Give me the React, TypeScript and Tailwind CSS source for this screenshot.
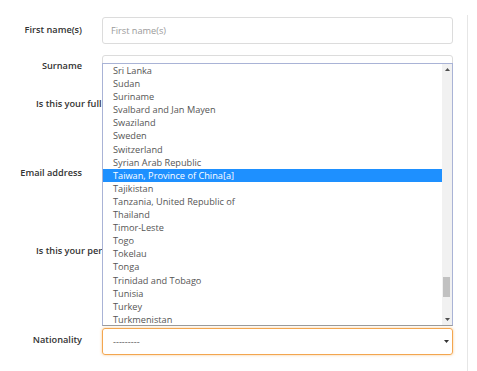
import React from 'react';

const countries = [
  'Sri Lanka',
  'Sudan',
  'Suriname',
  'Svalbard and Jan Mayen',
  'Swaziland',
  'Sweden',
  'Switzerland',
  'Syrian Arab Republic',
  'Taiwan, Province of China[a]',
  'Tajikistan',
  'Tanzania, United Republic of',
  'Thailand',
  'Timor-Leste',
  'Togo',
  'Tokelau',
  'Tonga',
  'Trinidad and Tobago',
  'Tunisia',
  'Turkey',
  'Turkmenistan',
];

const selected = 'Taiwan, Province of China[a]';

function Label({ children, long }: { children: React.ReactNode; long?: boolean }) {
  if (long) {
    return (
      <div className="w-[102px] shrink-0 pl-[36px] whitespace-nowrap overflow-hidden text-[9.2px] font-semibold text-[#333]">
        {children}
      </div>
    );
  }
  return (
    <div className="w-[82px] mr-[20px] shrink-0 text-right text-[9.2px] font-semibold text-[#333]">
      {children}
    </div>
  );
}

function CountryList() {
  return (
    <div className="absolute left-[102px] top-[63px] w-[351px] h-[263px] border border-[#a9b3d6] border-b-[#9a9a9a] bg-white flex">
      <ul className="flex-1 overflow-hidden">
        {countries.map((c) => (
          <li
            key={c}
            className={
              c === selected
                ? 'h-[13.1px] leading-[13px] pl-[10px] text-[9.2px] bg-[#1e90ff] text-white'
                : 'h-[13.1px] leading-[13px] pl-[10px] text-[9.2px] text-[#555]'
            }
          >
            {c}
          </li>
        ))}
      </ul>
      {/* scrollbar */}
      <div className="w-[10px] bg-[#f1f1f1] flex flex-col items-center justify-between py-[4px] relative">
        <svg width="5" height="3" viewBox="0 0 5 3">
          <polygon points="2.5,0 5,3 0,3" fill="#505050" />
        </svg>
        <div className="absolute left-[1px] top-[213px] w-[7px] h-[20px] bg-[#c1c1c1]" />
        <svg width="5" height="3" viewBox="0 0 5 3">
          <polygon points="0,0 5,0 2.5,3" fill="#505050" />
        </svg>
      </div>
    </div>
  );
}

export default function App() {
  return (
    <div className="w-[477px] h-[371px] bg-white relative overflow-hidden" style={{ fontFamily: '"Open Sans", sans-serif' }}>
      <div className="w-[468px] mt-[15px] h-[356px] border-r border-[#e6e6e6] pt-[2px]">
        <div className="flex h-[38px]">
          <Label><div className="pt-[6px]">First name(s)</div></Label>
          <div className="w-[351px] h-[27px] border border-[#dcdcdc] rounded-[3px] flex items-center px-[8px] text-[9.2px] text-[#9a9a9a]">
            First name(s)
          </div>
        </div>
        <div className="flex h-[38px]">
          <Label><div className="pt-[4px]">Surname</div></Label>
          <div className="w-[351px] h-[27px] border border-[#dcdcdc] rounded-[3px]" />
        </div>
        <div className="flex h-[68px]">
          <Label long><div className="pt-[4px]">Is this your full name?</div></Label>
        </div>
        <div className="flex h-[78px]">
          <Label><div className="pt-[5px]">Email address</div></Label>
          <div className="w-[351px] h-[27px] border border-[#dcdcdc] rounded-[3px]" />
        </div>
        <div className="flex h-[89px]">
          <Label long><div className="pt-[5px]">Is this your permanent address?</div></Label>
        </div>
        <div className="flex h-[30px]">
          <Label><div className="pt-[5px]">Nationality</div></Label>
          <div className="w-[351px] h-[27px] border border-[#f3a64f] rounded-[3px] shadow-[0_0_3px_rgba(243,166,79,0.6)] flex items-center justify-between pl-[10px] pr-[3px] text-[9.2px] text-[#555]">
            <span>---------</span>
            <svg width="5" height="3" viewBox="0 0 5 3">
              <polygon points="0,0 5,0 2.5,3" fill="#333" />
            </svg>
          </div>
        </div>
      </div>
      <CountryList />
    </div>
  );
}
